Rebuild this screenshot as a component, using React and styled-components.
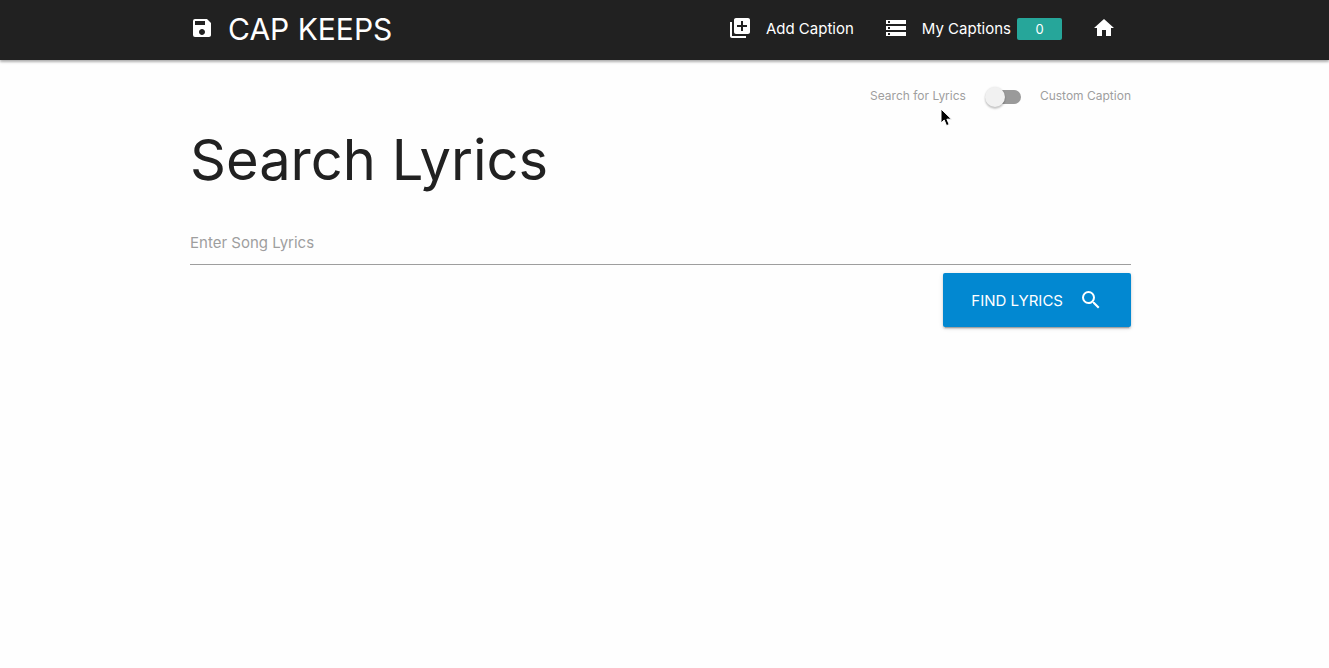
import React from "react";
import styled, { createGlobalStyle } from "styled-components";
import { MdSave, MdLibraryAdd, MdStorage, MdHome, MdSearch } from "react-icons/md";

const GlobalStyle = createGlobalStyle`
  *, *::before, *::after { box-sizing: border-box; }
  body {
    margin: 0;
    background: #fefefe;
    color: #212121;
    font-family: Inter, "Liberation Sans", sans-serif;
    font-size: 15px;
  }
`;

const Navbar = styled.header`
  height: 60px;
  padding: 0 14.9% 4px 14.3%;
  display: flex;
  align-items: center;
  justify-content: space-between;
  background: #212121;
  color: #fff;
  box-shadow: 0 2px 2px rgba(0, 0, 0, 0.2), 0 1px 4px rgba(0, 0, 0, 0.2);
`;

const Brand = styled.a`
  display: flex;
  align-items: center;
  gap: 14px;
  color: inherit;
  font-size: 30px;
  line-height: 36px;
  text-decoration: none;
  white-space: nowrap;
`;

const NavLinks = styled.nav`
  display: flex;
  align-items: center;
`;

const NavLink = styled.a`
  display: flex;
  align-items: center;
  padding: 0 15px;
  gap: 14px;
  color: inherit;
  line-height: 24px;
  text-decoration: none;
  white-space: nowrap;
`;

const LinkLabel = styled.span`
  display: flex;
  align-items: center;
  gap: 6px;
  padding-top: 2px;
`;

const Badge = styled.span`
  width: 45px;
  height: 22px;
  border-radius: 2px;
  background: #26a69a;
  font-size: 13px;
  line-height: 22px;
  text-align: center;
`;

const Main = styled.main`
  padding: 24px 14.9% 24px 14.3%;
`;

const SwitchRow = styled.div`
  position: relative;
  display: flex;
  justify-content: flex-end;
`;

const SwitchLabel = styled.label`
  display: flex;
  align-items: center;
  gap: 19px;
  color: #9e9e9e;
  font-size: 12px;
  line-height: 24px;
  cursor: pointer;
`;

const Toggle = styled.input`
  appearance: none;
  position: relative;
  width: 36px;
  height: 14px;
  margin: 2px 0 0;
  border-radius: 15px;
  background: linear-gradient(to right, transparent 5px, #9a9a9a 5px);
  cursor: pointer;

  &::before {
    content: "";
    position: absolute;
    top: -3px;
    left: 0;
    width: 20px;
    height: 20px;
    border-radius: 50%;
    background: #f1f1f1;
    box-shadow: 0 2px 2px rgba(0, 0, 0, 0.2), 0 0 2px rgba(0, 0, 0, 0.12);
    transition: left 0.2s;
  }

  &:checked::before { left: 16px; }
`;

const Cursor = styled.svg`
  position: absolute;
  top: 24px;
  right: 178px;
  width: 13px;
  height: 20px;
  pointer-events: none;
`;

const Title = styled.h1`
  margin: 16px 0 24px;
  font-size: 56px;
  font-weight: 400;
  line-height: 72px;
`;

const Form = styled.form`
  display: flex;
  flex-direction: column;
  align-items: flex-end;
  gap: 8px;
`;

const LyricsInput = styled.input`
  width: 100%;
  height: 45px;
  padding: 0;
  border: 0;
  border-bottom: 1px solid #9e9e9e;
  outline: 0;
  background: transparent;
  color: inherit;
  font-family: inherit;
  font-size: 15px;

  &::placeholder { color: #9e9e9e; opacity: 1; }
`;

const FindButton = styled.button`
  display: flex;
  align-items: center;
  gap: 16px;
  height: 54px;
  padding: 0 28px;
  border: 0;
  border-radius: 2px;
  background: #0288d1;
  color: #fff;
  font-family: inherit;
  font-size: 15px;
  text-transform: uppercase;
  box-shadow: 0 2px 2px rgba(0, 0, 0, 0.14), 0 1px 5px rgba(0, 0, 0, 0.12),
    0 3px 1px -2px rgba(0, 0, 0, 0.2);
  cursor: pointer;
`;

export default function App() {
  return (
    <>
      <GlobalStyle />
      <Navbar>
        <Brand href="#">
          <MdSave size={24} />
          <LinkLabel>CAP KEEPS</LinkLabel>
        </Brand>
        <NavLinks>
          <NavLink href="#add">
            <MdLibraryAdd size={24} />
            <LinkLabel>Add Caption</LinkLabel>
          </NavLink>
          <NavLink href="#captions">
            <MdStorage size={24} />
            <LinkLabel>
              My Captions
              <Badge>0</Badge>
            </LinkLabel>
          </NavLink>
          <NavLink href="#home" aria-label="Home">
            <MdHome size={24} />
          </NavLink>
        </NavLinks>
      </Navbar>
      <Main>
        <SwitchRow>
          <SwitchLabel>
            Search for Lyrics
            <Toggle type="checkbox" />
            Custom Caption
          </SwitchLabel>
          <Cursor viewBox="0 0 13 20" aria-hidden="true">
            <path
              d="M1 1v14l3.2-3 2.3 5.6 2.7-1.1-2.3-5.3h4.6z"
              fill="#000"
              stroke="#fff"
              strokeWidth="1"
            />
          </Cursor>
        </SwitchRow>
        <Title>Search Lyrics</Title>
        <Form onSubmit={(event) => event.preventDefault()}>
          <LyricsInput
            type="text"
            aria-label="Enter Song Lyrics"
            placeholder="Enter Song Lyrics"
          />
          <FindButton type="submit">
            Find Lyrics
            <MdSearch size={24} />
          </FindButton>
        </Form>
      </Main>
    </>
  );
}
